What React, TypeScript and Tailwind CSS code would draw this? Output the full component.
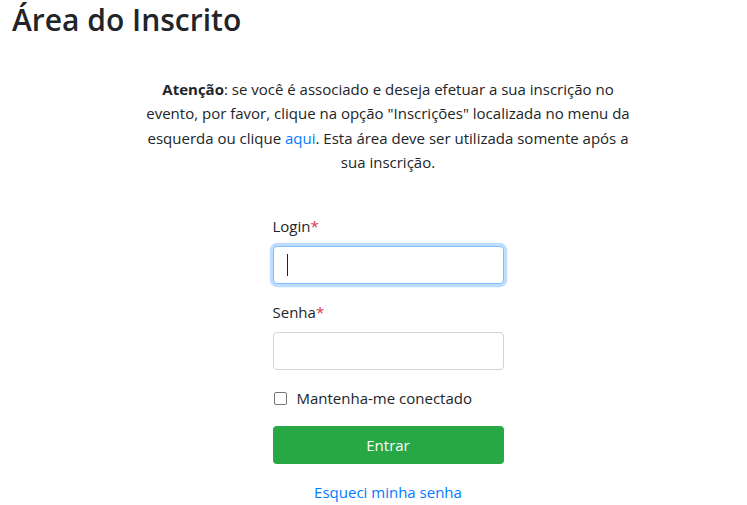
export default function App() {
  return (
    <div
      className="w-[747px] h-[505px] bg-white text-[#212529] overflow-hidden"
      style={{ fontFamily: '"Open Sans", "Noto Sans", sans-serif' }}
    >
      <h2 className="pl-[12px] text-[30px] leading-[40px] font-semibold">Área do Inscrito</h2>
      <div className="pl-[29px] flex flex-col items-center">
        <p className="mt-[37px] text-[15px] leading-[24.3px] text-center">
          <span className="whitespace-nowrap"><b className="font-bold">Atenção</b>: se você é associado e deseja efetuar a sua inscrição no</span>
          <br />
          <span className="whitespace-nowrap">evento, por favor, clique na opção "Inscrições" localizada no menu da</span>
          <br />
          <span className="whitespace-nowrap">esquerda ou clique <a className="text-[#007bff]" href="#">aqui</a>. Esta área deve ser utilizada somente após a</span>
          <br />
          <span className="whitespace-nowrap">sua inscrição.</span>
        </p>
        <form className="mt-[40px] w-[231px] text-[15px] leading-[24px]">
          <div className="mb-4">
            <label className="block mb-2">
              Login<span className="text-[#dc3545]">*</span>
            </label>
            <div className="h-[38px] rounded-[4px] border border-[#80bdff] shadow-[0_0_0_3.2px_rgba(0,123,255,0.25)] bg-white flex items-center pl-[13px]">
              <div className="w-px h-[22px] bg-[#212529]" />
            </div>
          </div>
          <div className="mb-4">
            <label className="block mb-2">
              Senha<span className="text-[#dc3545]">*</span>
            </label>
            <div className="h-[38px] rounded-[4px] border border-[#ced4da] bg-white" />
          </div>
          <div className="mb-4 flex items-center h-[24px]">
            <span className="ml-[1px] w-[13px] h-[13px] rounded-[2px] border border-[#767676] bg-white" />
            <span className="ml-[10px]">Mantenha-me conectado</span>
          </div>
          <button
            type="button"
            className="w-full h-[38px] rounded-[4px] bg-[#28a745] text-white text-[15px]"
          >
            Entrar
          </button>
          <div className="mt-4 text-center">
            <a className="text-[#007bff]" href="#">Esqueci minha senha</a>
          </div>
        </form>
      </div>
    </div>
  );
}
